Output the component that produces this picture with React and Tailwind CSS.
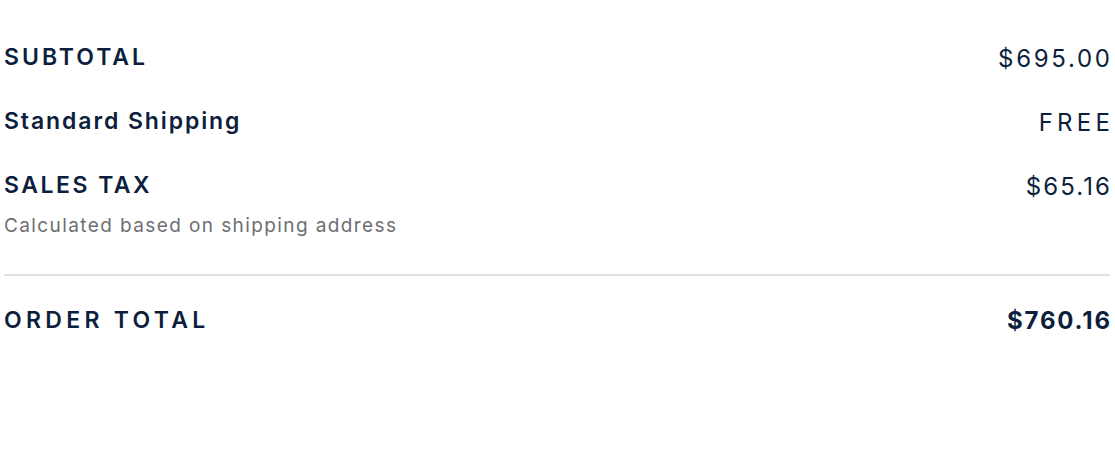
const rows = [
  { label: 'SUBTOTAL', labelTrack: 'tracking-[3px]', value: '$695.00', valueTrack: 'tracking-[2.7px] -mr-[2.7px]' },
  { label: 'Standard Shipping', labelTrack: 'tracking-[1.9px]', value: 'FREE', valueTrack: 'tracking-[4.3px] -mr-[4.3px]' },
  {
    label: 'SALES TAX',
    labelTrack: 'tracking-[2.5px]',
    value: '$65.16',
    valueTrack: 'tracking-[2.1px] -mr-[2.1px]',
    note: 'Calculated based on shipping address'
  }
]

export default function App() {
  return (
    <div className="min-h-[455px] bg-white pl-[4px] pr-[5px] pt-[41px] text-[#0d1f3c]" style={{ fontFamily: 'Inter, "Liberation Sans", sans-serif' }}>
      <div className="flex flex-col gap-[32px]">
        {rows.map((row) => (
          <div key={row.label}>
            <div className="flex h-[32px] items-start justify-between">
              <p className={`text-[23px] font-semibold leading-[32px] ${row.labelTrack}`}>{row.label}</p>
              <p className={`mt-[2px] text-[24px] leading-[32px] ${row.valueTrack}`}>{row.value}</p>
            </div>
            {row.note && (
              <p className="mt-[11px] text-[19px] leading-[28px] tracking-[1.4px] text-[#6e6e73]">{row.note}</p>
            )}
          </div>
        ))}
      </div>

      <div className="mt-[34px] border-t-2 border-[#e2e2e6]" />

      <div className="mt-[28px] flex h-[32px] items-start justify-between">
        <p className="text-[23px] font-semibold leading-[32px] tracking-[4.3px]">ORDER TOTAL</p>
        <p className="mt-[1px] -mr-[1.8px] text-[24px] font-bold leading-[32px] tracking-[1.8px]">$760.16</p>
      </div>
    </div>
  )
}
